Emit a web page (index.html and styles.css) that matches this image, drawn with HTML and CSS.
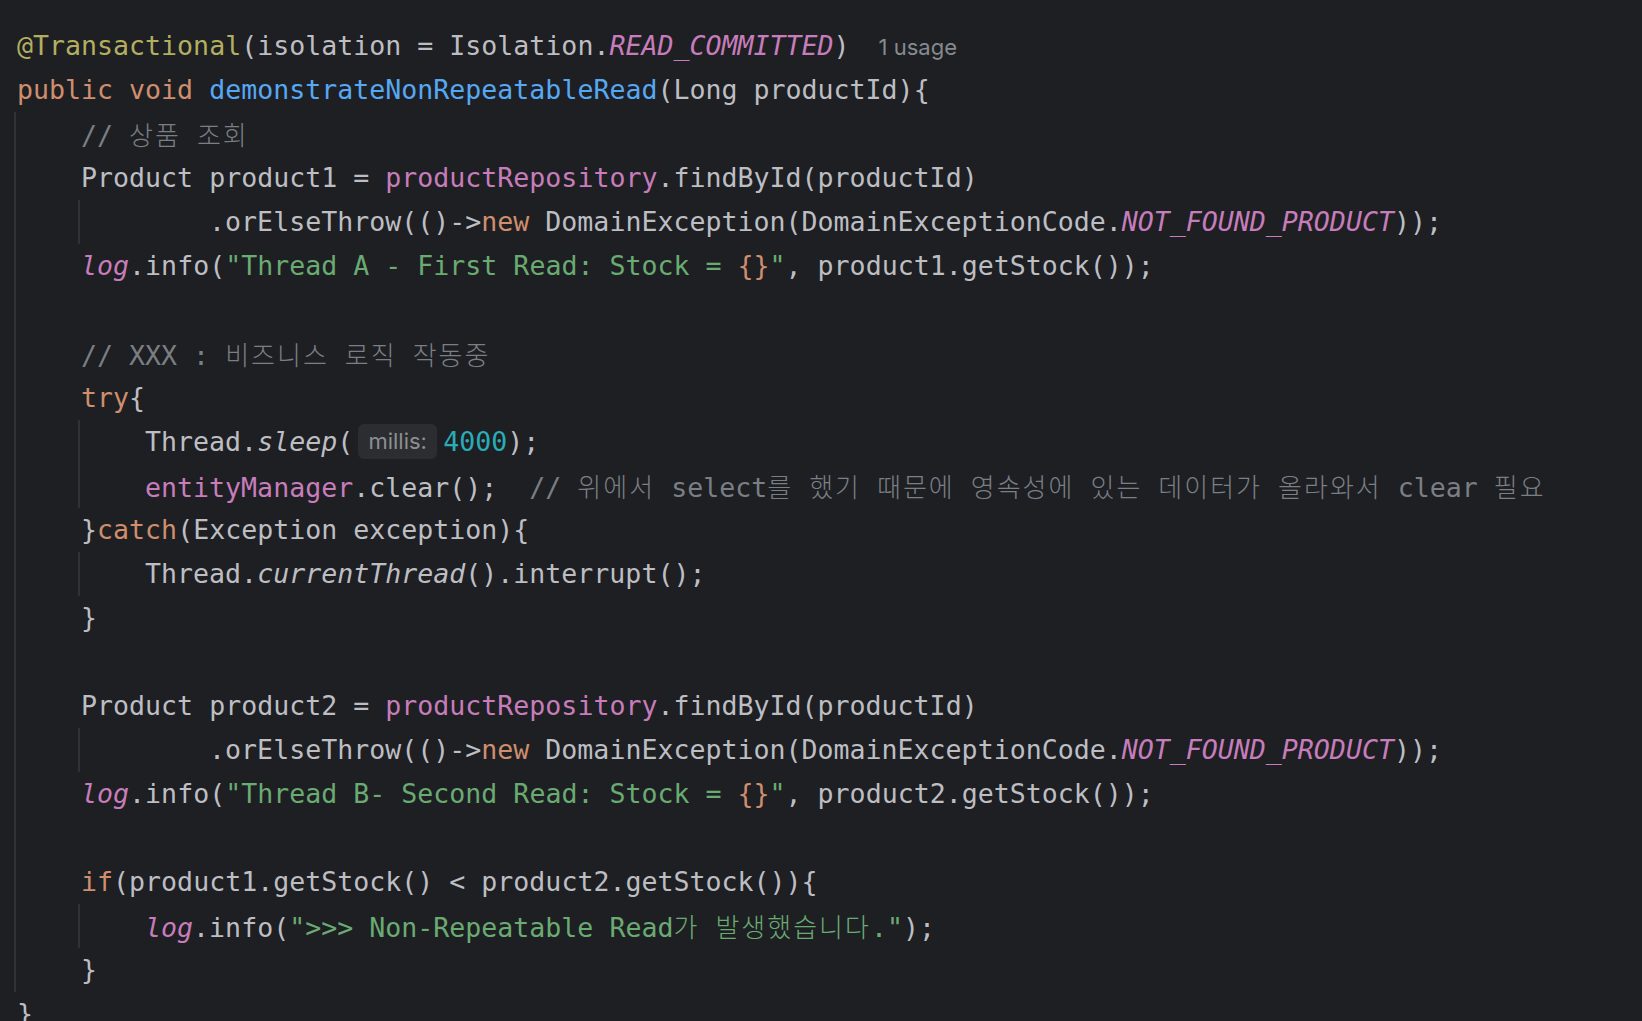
FILE: index.html
```html
<!DOCTYPE html>
<html lang="ko">
<head>
<meta charset="utf-8">
<title>Editor</title>
<link rel="stylesheet" href="styles.css">
</head>
<body>
<div class="editor">
<div class="line"><span class="ann">@Transactional</span>(isolation = Isolation.<span class="stat">READ_COMMITTED</span>)<span class="usage">1 usage</span></div>
<div class="line"><span class="kw">public void </span><span class="fn">demonstrateNonRepeatableRead</span>(Long productId){</div>
<div class="block">
  <div class="line"><span class="cmt">    // <span class="ko">상품</span> <span class="ko">조회</span></span></div>
  <div class="line">    Product product1 = <span class="fld">productRepository</span>.findById(productId)</div>
  <div class="block inner">
    <div class="line">        .orElseThrow(()-&gt;<span class="kw">new</span> DomainException(DomainExceptionCode.<span class="stat">NOT_FOUND_PRODUCT</span>));</div>
  </div>
  <div class="line">    <span class="stat">log</span>.info(<span class="str">"Thread A - First Read: Stock = <span class="brace">{}</span>"</span>, product1.getStock());</div>
  <div class="line"></div>
  <div class="line"><span class="cmt">    // XXX : <span class="ko">비즈니스</span> <span class="ko">로직</span> <span class="ko">작동중</span></span></div>
  <div class="line">    <span class="kw">try</span>{</div>
  <div class="block inner">
    <div class="line">    Thread.<span class="sm">sleep</span>(<span class="hint">millis:</span><span class="num">4000</span>);</div>
    <div class="line">    <span class="fld">entityManager</span>.clear();  <span class="cmt">// <span class="ko">위에서</span> select<span class="ko">를</span> <span class="ko">했기</span> <span class="ko">때문에</span> <span class="ko">영속성에</span> <span class="ko">있는</span> <span class="ko">데이터가</span> <span class="ko">올라와서</span> clear <span class="ko">필요</span></span></div>
  </div>
  <div class="line">    }<span class="kw">catch</span>(Exception exception){</div>
  <div class="block inner">
    <div class="line">    Thread.<span class="sm">currentThread</span>().interrupt();</div>
  </div>
  <div class="line">    }</div>
  <div class="line"></div>
  <div class="line">    Product product2 = <span class="fld">productRepository</span>.findById(productId)</div>
  <div class="block inner">
    <div class="line">        .orElseThrow(()-&gt;<span class="kw">new</span> DomainException(DomainExceptionCode.<span class="stat">NOT_FOUND_PRODUCT</span>));</div>
  </div>
  <div class="line">    <span class="stat">log</span>.info(<span class="str">"Thread B- Second Read: Stock = <span class="brace">{}</span>"</span>, product2.getStock());</div>
  <div class="line"></div>
  <div class="line">    <span class="kw">if</span>(product1.getStock() &lt; product2.getStock()){</div>
  <div class="block inner">
    <div class="line">    <span class="stat">log</span>.info(<span class="str">"&gt;&gt;&gt; Non-Repeatable Read<span class="ko">가</span> <span class="ko">발생했습니다</span>."</span>);</div>
  </div>
  <div class="line">    }</div>
</div>
<div class="line">}</div>
</div>
</body>
</html>
```

FILE: styles.css
```css
html, body {
  margin: 0;
  padding: 0;
  background: #1e1f22;
}

.editor {
  width: 1642px;
  height: 1021px;
  box-sizing: border-box;
  overflow: hidden;
  padding: 24px 0 0 17px;
  background: #1e1f22;
  color: #bcbec4;
  font-family: "DejaVu Sans Mono", "Noto Sans CJK KR", monospace;
  font-size: 26.6px;
}

.line {
  height: 44px;
  line-height: 44px;
  white-space: pre;
}

.block {
  border-left: 2px solid #303236;
  margin-left: -3px;
  padding-left: 1px;
}

.block.inner {
  margin-left: 61px;
}

.ann { color: #b3ae60; }
.kw { color: #cf8e6d; }
.fn { color: #56a8f5; }
.fld { color: #c77dbb; }
.stat { color: #c77dbb; font-style: italic; }
.sm { font-style: italic; }
.str { color: #6aab73; }
.brace { color: #cf8e6d; }
.cmt { color: #7a7e85; }
.num { color: #2aacb8; }

.ko {
  font-family: "Noto Sans CJK KR", sans-serif;
  font-size: 26px;
  letter-spacing: 2px;
  font-weight: 300;
}

.hint {
  display: inline-block;
  box-sizing: border-box;
  width: 79px;
  height: 35px;
  line-height: 35px;
  margin: 0 6px 0 5px;
  vertical-align: 2px;
  border-radius: 6px;
  background: #2b2d30;
  color: #8c8f94;
  font-family: Inter, "Noto Sans", sans-serif;
  font-size: 22px;
  text-align: center;
}

.usage {
  margin-left: 29px;
  color: #868a91;
  font-family: Inter, "Noto Sans", sans-serif;
  font-size: 22px;
}
```
